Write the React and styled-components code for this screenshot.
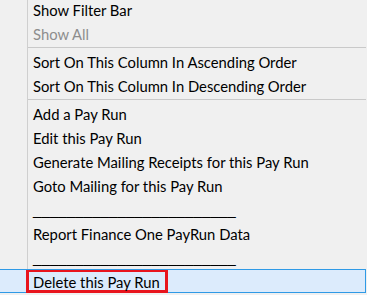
import React from 'react';
import styled, {createGlobalStyle} from 'styled-components';

const GlobalStyle = createGlobalStyle`
  html, body {
    margin: 0;
    padding: 0;
    background: #f0f0f0;
    overflow: hidden;
  }
`;

const RULE = '________________________';

const MENU_ITEMS = [
  {label: 'Show Filter Bar'},
  {label: 'Show All', disabled: true},
  {separator: true},
  {label: 'Sort On This Column In Ascending Order'},
  {label: 'Sort On This Column In Descending Order'},
  {separator: true},
  {label: 'Add a Pay Run'},
  {label: 'Edit this Pay Run'},
  {label: 'Generate Mailing Receipts for this Pay Run'},
  {label: 'Goto Mailing for this Pay Run'},
  {label: RULE, rule: true},
  {label: 'Report Finance One PayRun Data'},
  {label: RULE, rule: true},
  {label: 'Delete this Pay Run', active: true},
];

function App() {
  return (
    <>
      <GlobalStyle />
      <Menu>
        {MENU_ITEMS.map((item, idx) =>
          item.separator ? (
            <Separator key={idx} />
          ) : item.active ? (
            <ActiveItem key={idx}>
              <Marked>{item.label}</Marked>
            </ActiveItem>
          ) : (
            <Item key={idx} disabled={item.disabled} rule={item.rule}>
              {item.label}
            </Item>
          ),
        )}
      </Menu>
    </>
  );
}

const Menu = styled.div`
  width: 366px;
  margin-top: -3px;
  display: flex;
  flex-direction: column;
  background: linear-gradient(
    to right,
    transparent 27px,
    #cfcfcf 27px,
    #cfcfcf 28px,
    transparent 28px
  );
  font-family: Lato, 'Noto Sans', sans-serif;
  font-size: 14.8px;
  color: #000;
`;

const Item = styled.div.withConfig({
  shouldForwardProp: (prop) => prop !== 'rule' && prop !== 'disabled',
})`
  height: 24px;
  display: flex;
  align-items: center;
  padding: 1px 0 0 33px;
  box-sizing: border-box;
  white-space: nowrap;
  color: ${(props) => (props.disabled ? '#8d8d8d' : '#000')};
  font-family: ${(props) =>
    props.rule ? "'Liberation Sans', Arial, sans-serif" : 'inherit'};
  font-size: ${(props) => (props.rule ? '15.2px' : 'inherit')};
`;

const Separator = styled.div`
  height: 4px;
  margin-left: 28px;
  display: flex;
  align-items: center;

  &::after {
    content: '';
    flex: 1;
    height: 1px;
    background: #c9c9c9;
  }
`;

const ActiveItem = styled.div`
  height: 24px;
  display: flex;
  align-items: stretch;
  padding-left: 26px;
  box-sizing: border-box;
  background: #dcebfc;
  border: 1px solid #2f9ae6;
  border-left: none;
`;

const Marked = styled.span`
  display: flex;
  align-items: center;
  margin: 0 0 -1px;
  padding: 1px 5px 0 4px;
  border: 3px solid #e8141d;
  border-top-width: 2px;
  white-space: nowrap;
`;

export default App;
